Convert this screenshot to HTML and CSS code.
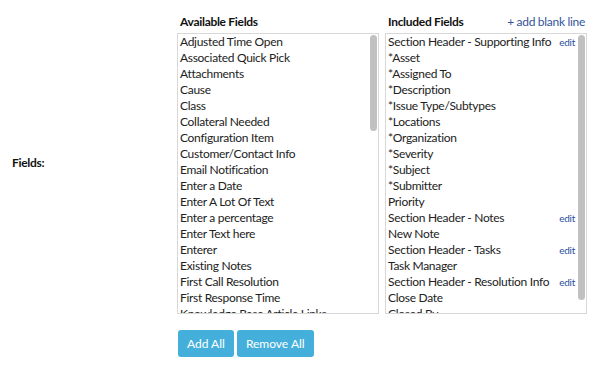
FILE: index.html
```
<!DOCTYPE html>
<html lang="en">
<head>
  <meta charset="UTF-8">
  <title>Form Layout</title>
  <link rel="stylesheet" href="styles.css">
</head>
<body>
<div class="form">
  <div class="field-row">
    <label class="field-label">Fields:</label>
    <div class="picker">
      <div class="column">
        <div class="column-head">Available Fields</div>
        <div class="list">
          <div class="list-items">
            <div class="item">Adjusted Time Open</div>
            <div class="item">Associated Quick Pick</div>
            <div class="item">Attachments</div>
            <div class="item">Cause</div>
            <div class="item">Class</div>
            <div class="item">Collateral Needed</div>
            <div class="item">Configuration Item</div>
            <div class="item">Customer/Contact Info</div>
            <div class="item">Email Notification</div>
            <div class="item">Enter a Date</div>
            <div class="item">Enter A Lot Of Text</div>
            <div class="item">Enter a percentage</div>
            <div class="item">Enter Text here</div>
            <div class="item">Enterer</div>
            <div class="item">Existing Notes</div>
            <div class="item">First Call Resolution</div>
            <div class="item">First Response Time</div>
            <div class="item">Knowledge Base Article Links</div>
          </div>
          <div class="scrollbar"><div class="thumb" style="height: 96px"></div></div>
        </div>
      </div>

      <div class="column">
        <div class="column-head">
          <span>Included Fields</span>
          <a href="#" class="add-line">+ add blank line</a>
        </div>
        <div class="list">
          <div class="list-items">
            <div class="item">Section Header - Supporting Info <a href="#" class="edit">edit</a></div>
            <div class="item">*Asset</div>
            <div class="item">*Assigned To</div>
            <div class="item">*Description</div>
            <div class="item">*Issue Type/Subtypes</div>
            <div class="item">*Locations</div>
            <div class="item">*Organization</div>
            <div class="item">*Severity</div>
            <div class="item">*Subject</div>
            <div class="item">*Submitter</div>
            <div class="item">Priority</div>
            <div class="item">Section Header - Notes <a href="#" class="edit">edit</a></div>
            <div class="item">New Note</div>
            <div class="item">Section Header - Tasks <a href="#" class="edit">edit</a></div>
            <div class="item">Task Manager</div>
            <div class="item">Section Header - Resolution Info <a href="#" class="edit">edit</a></div>
            <div class="item">Close Date</div>
            <div class="item">Closed By</div>
          </div>
          <div class="scrollbar"><div class="thumb" style="height: 265px"></div></div>
        </div>
      </div>
    </div>
  </div>

  <div class="buttons">
    <button type="button" class="btn">Add All</button>
    <button type="button" class="btn">Remove All</button>
  </div>
</div>
</body>
</html>
```
FILE: styles.css
```
body {
  margin: 0;
  font-family: 'Lato', 'Open Sans', sans-serif;
  font-size: 12px;
  letter-spacing: -0.3px;
  color: #222;
  background: #fff;
}

.form {
  padding-top: 14px;
}

.field-row {
  display: flex;
  align-items: center;
}

.field-label {
  width: 165px;
  padding: 0 0 4px 12px;
  font-weight: bold;
  color: #111;
}

.picker {
  display: flex;
  gap: 6px;
}

.column {
  width: 202px;
}

.column-head {
  display: flex;
  justify-content: space-between;
  height: 16px;
  line-height: 16px;
  padding: 0 2px 0 3px;
  margin-bottom: 3px;
  font-weight: bold;
  color: #111;
}

.add-line {
  font-weight: normal;
  color: #34539c;
  text-decoration: none;
}

.list {
  display: flex;
  height: 279px;
  border: 1px solid #d8d8d8;
}

.list-items {
  flex: 1;
  min-width: 0;
  overflow: hidden;
}

.scrollbar {
  width: 7px;
  padding: 1px 1px 0 2px;
}

.thumb {
  background: #c1c1c1;
  border-radius: 4px;
}

.item {
  display: flex;
  justify-content: space-between;
  align-items: center;
  height: 16px;
  line-height: 16px;
  padding-left: 2px;
  white-space: nowrap;
}

.edit {
  font-size: 10px;
  color: #2d4ea0;
  text-decoration: none;
  padding-right: 1px;
}

.buttons {
  display: flex;
  gap: 3px;
  margin: 16px 0 0 178px;
}

.btn {
  height: 27px;
  padding: 0 9px;
  font-family: inherit;
  font-size: 12px;
  letter-spacing: 0;
  color: #fff;
  background: #45afdc;
  border: none;
  border-radius: 3px;
  cursor: pointer;
}
```
